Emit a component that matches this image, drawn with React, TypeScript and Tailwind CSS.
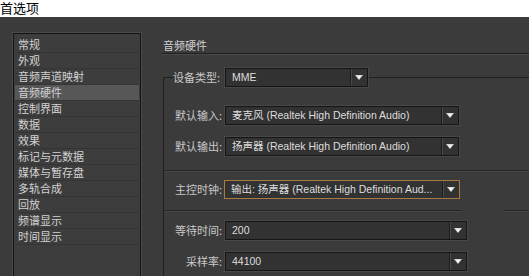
const cjk = { fontFamily: '"Noto Sans CJK SC", "Noto Sans", sans-serif' }
const latin = { fontFamily: '"Liberation Sans", "Noto Sans CJK SC", sans-serif' }

const items = ['常规', '外观', '音频声道映射', '音频硬件', '控制界面', '数据', '效果', '标记与元数据', '媒体与暂存盘', '多轨合成', '回放', '频谱显示', '时间显示']

function Arrow() {
  return (
    <svg width="8" height="6" viewBox="0 0 8 6">
      <polygon points="0,0 8,0 4,5" fill="#d8d8d8" />
      <polygon points="2,1 6,1 4,4" fill="#f4f4f4" />
    </svg>
  )
}

function Select({ value, width, active }: { value: string; width: string; active?: boolean }) {
  return (
    <div
      className={`flex h-[19px] items-stretch bg-[#323232] ${width} ${
        active ? 'border border-[#a67a42]' : 'border border-[#151515] shadow-[0_0_0_1px_#474747]'
      }`}
    >
      <div className="flex-1 overflow-hidden whitespace-nowrap pl-[6px] text-[10.5px] leading-[17px] text-[#dedede]" style={latin}>
        {value}
      </div>
      <div className="flex w-[17px] items-center justify-center border-l border-[#1c1c1c] shadow-[inset_1px_0_0_#4a4a4a]">
        <Arrow />
      </div>
    </div>
  )
}

function Row({ label, children, className }: { label: string; children: React.ReactNode; className?: string }) {
  return (
    <div className={`flex items-center pl-[9px] ${className ?? ''}`}>
      <div className="mr-[3px] w-[49px] whitespace-nowrap text-right text-[11px] text-[#c9c9c9]" style={cjk}>
        {label}
      </div>
      {children}
    </div>
  )
}

function Sep({ className }: { className?: string }) {
  return <div className={`h-[2px] border-t border-[#262626] border-b border-b-[#474747] ${className ?? ''}`} />
}

export default function App() {
  return (
    <div className="flex h-[276px] w-[529px] flex-col overflow-hidden bg-[#3b3b3b]">
      <div className="h-[17px] shrink-0 bg-white text-[13px] leading-[16px] text-black" style={cjk}>
        首选项
      </div>

      <div className="flex flex-1">
        <div className="pl-[13px] pt-[16px]">
          <div className="h-[260px] w-[128px] border border-[#141414] bg-[#3d3d3d] px-[1px] pt-[3px] shadow-[0_0_0_1px_#4a4a4a]">
            {items.map((it) => (
              <div
                key={it}
                className={`h-[16px] border-b border-[#343434] pl-[3px] text-[11px] leading-[15px] text-[#d2d2d2] ${
                  it === '音频硬件' ? 'bg-[#575757]' : ''
                }`}
                style={cjk}
              >
                {it}
              </div>
            ))}
          </div>
        </div>

        <div className="ml-[21px] flex-1">
          <div className="border-b border-[#1f1f1f] pl-[1px] pt-[20px] text-[11px] leading-[16px] text-[#d0d0d0] shadow-[0_1px_0_#4a4a4a]" style={cjk}>
            音频硬件
          </div>

          <fieldset className="ml-[1px] mt-[14px] border-l border-t border-[#1f1f1f] pb-[10px]">
            <legend className="ml-[9px]">
              <div className="flex items-center">
                <div className="mr-[3px] w-[49px] text-left text-[11px] text-[#c9c9c9]" style={cjk}>
                  设备类型:
                </div>
                <Select value="MME" width="w-[143px]" />
              </div>
            </legend>

            <Row label="默认输入:" className="mt-[19px]">
              <Select value="麦克风 (Realtek High Definition Audio)" width="w-[234px]" />
            </Row>
            <Row label="默认输出:" className="mt-[12px]">
              <Select value="扬声器 (Realtek High Definition Audio)" width="w-[234px]" />
            </Row>

            <Sep className="mt-[14px]" />

            <Row label="主控时钟:" className="mt-[8px]">
              <div className="-ml-[1px]">
                <Select value="输出: 扬声器 (Realtek High Definition Aud..." width="w-[236px]" active />
              </div>
            </Row>

            <div className="mt-[11px] flex">
              <Sep className="w-[298px]" />
              <div className="w-[41px]" />
              <Sep className="flex-1" />
            </div>

            <Row label="等待时间:" className="mt-[9px]">
              <Select value="200" width="w-[242px]" />
            </Row>
            <Row label="采样率:" className="mt-[12px]">
              <Select value="44100" width="w-[242px]" />
            </Row>
          </fieldset>
        </div>
      </div>
    </div>
  )
}
